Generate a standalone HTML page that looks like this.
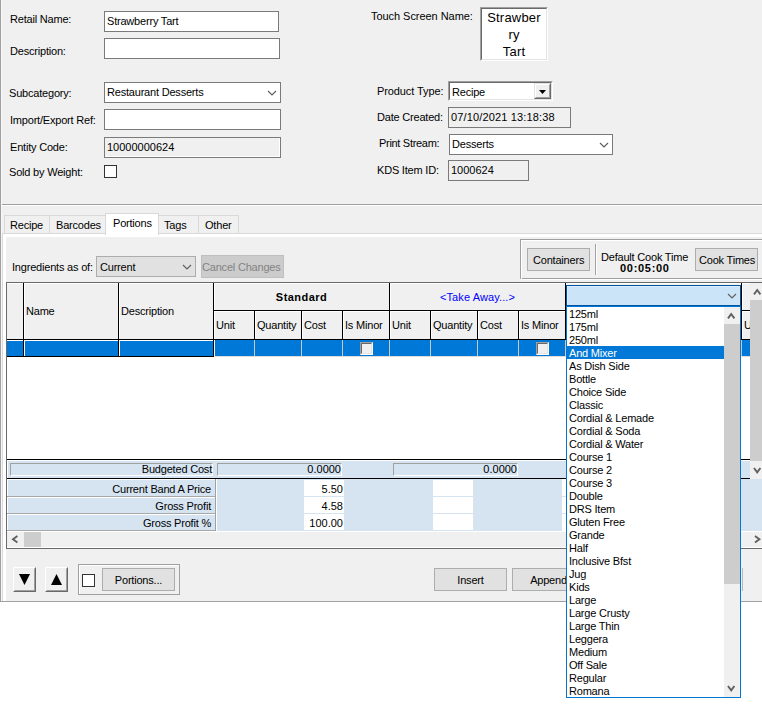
<!DOCTYPE html>
<html><head><meta charset="utf-8"><style>
html,body{margin:0;padding:0;background:#fff;width:762px;height:727px;overflow:hidden}
body div, body svg{position:absolute}
.t{white-space:pre;font-family:"Liberation Sans",sans-serif;font-size:11px;line-height:13px;color:#000;letter-spacing:-0.2px}
</style></head><body>
<div style="left:0px;top:0px;width:762px;height:601px;background:#f0f0f0"></div>
<div style="left:0px;top:0px;width:1px;height:602px;background:#a0a0a0"></div>
<div style="left:1px;top:0px;width:1px;height:601px;background:#f8f8f8"></div>
<div style="left:0px;top:601px;width:762px;height:1px;background:#a0a0a0"></div>
<div class="t" style="left:10px;top:13px;">Retail Name:</div>
<div class="t" style="left:10px;top:45px;">Description:</div>
<div class="t" style="left:9px;top:87px;">Subcategory:</div>
<div class="t" style="left:10px;top:114px;">Import/Export Ref:</div>
<div class="t" style="left:10px;top:141px;">Entity Code:</div>
<div class="t" style="left:9px;top:166px;">Sold by Weight:</div>
<div class="t" style="left:371px;top:10px;letter-spacing:-0.05px">Touch Screen Name:</div>
<div class="t" style="left:377px;top:85px;letter-spacing:-0.1px">Product Type:</div>
<div class="t" style="left:377px;top:111px;">Date Created:</div>
<div class="t" style="left:379px;top:137px;letter-spacing:-0.3px">Print Stream:</div>
<div class="t" style="left:377px;top:164px;">KDS Item ID:</div>
<div style="left:104px;top:11px;width:175px;height:21px;background:#fff;border:1px solid #7a7a7a;box-sizing:border-box"></div>
<div class="t" style="left:107px;top:15px;">Strawberry Tart</div>
<div style="left:104px;top:38px;width:176px;height:21px;background:#fff;border:1px solid #7a7a7a;box-sizing:border-box"></div>
<div style="left:104px;top:82px;width:177px;height:21px;background:#fff;border:1px solid #7a7a7a;box-sizing:border-box"></div>
<div class="t" style="left:107px;top:86px;">Restaurant Desserts</div>
<svg style="left:267.0px;top:90.0px" width="10" height="6"><path d="M1 1 L5.0 5 L9 1" fill="none" stroke="#606060" stroke-width="1.2"/></svg>
<div style="left:104px;top:109px;width:177px;height:21px;background:#fff;border:1px solid #7a7a7a;box-sizing:border-box"></div>
<div style="left:104px;top:137px;width:177px;height:21px;background:#f0f0f0;border:1px solid #7a7a7a;box-sizing:border-box"></div>
<div style="left:105px;top:138px;width:175px;height:19px;border-right:1px solid #fff;border-bottom:1px solid #fff;box-sizing:border-box"></div>
<div class="t" style="left:107px;top:141px;letter-spacing:0">10000000624</div>
<div style="left:104px;top:165px;width:13px;height:13px;background:#fff;border:1px solid #333;box-sizing:border-box"></div>
<div style="left:480px;top:7px;width:68px;height:54px;background:#fff;border-style:solid;border-width:1px;border-color:#a0a0a0 #fff #fff #a0a0a0;box-sizing:border-box"></div>
<div style="left:481px;top:8px;width:66px;height:52px;border-style:solid;border-width:1px;border-color:#696969 #e3e3e3 #e3e3e3 #696969;box-sizing:border-box"></div>
<div class="t" style="left:482px;top:9px;width:64px;text-align:center;font-size:13px;line-height:17px;letter-spacing:0.2px">Strawber<br>ry<br>Tart</div>
<div style="left:448px;top:81px;width:105px;height:20px;background:#fff;border-style:solid;border-width:1px;border-color:#a0a0a0 #fff #fff #a0a0a0;box-sizing:border-box"></div>
<div style="left:449px;top:82px;width:103px;height:18px;border-style:solid;border-width:1px;border-color:#696969 #e3e3e3 #e3e3e3 #696969;box-sizing:border-box"></div>
<div style="left:534px;top:83px;width:17px;height:16px;background:#f0f0f0;border-style:solid;border-width:1px;border-color:#e3e3e3 #696969 #696969 #e3e3e3;box-sizing:border-box"></div>
<div style="left:535px;top:84px;width:15px;height:14px;border-style:solid;border-width:1px;border-color:#fff #a0a0a0 #a0a0a0 #fff;box-sizing:border-box"></div>
<svg style="left:539px;top:90px" width="8" height="5"><path d="M0 0 L7 0 L3.5 4 Z" fill="#000"/></svg>
<div class="t" style="left:452px;top:86px;">Recipe</div>
<div style="left:448px;top:107px;width:123px;height:21px;background:#f0f0f0;border:1px solid #7a7a7a;box-sizing:border-box"></div>
<div class="t" style="left:451px;top:111px;letter-spacing:0.15px">07/10/2021 13:18:38</div>
<div style="left:449px;top:134px;width:164px;height:21px;background:#fff;border:1px solid #7a7a7a;box-sizing:border-box"></div>
<div class="t" style="left:452px;top:138px;">Desserts</div>
<svg style="left:599.0px;top:142.0px" width="10" height="6"><path d="M1 1 L5.0 5 L9 1" fill="none" stroke="#606060" stroke-width="1.2"/></svg>
<div style="left:448px;top:160px;width:81px;height:21px;background:#f0f0f0;border:1px solid #7a7a7a;box-sizing:border-box"></div>
<div class="t" style="left:451px;top:164px;letter-spacing:0">1000624</div>
<div style="left:2px;top:204px;width:760px;height:1px;background:#a0a0a0"></div>
<div style="left:2px;top:205px;width:760px;height:1px;background:#fff"></div>
<div style="left:4px;top:215px;width:46px;height:19px;background:#f0f0f0;border:1px solid #d9d9d9;border-bottom:none;box-sizing:border-box"></div>
<div class="t" style="left:10px;top:219px;">Recipe</div>
<div style="left:49px;top:215px;width:57px;height:19px;background:#f0f0f0;border:1px solid #d9d9d9;border-bottom:none;box-sizing:border-box"></div>
<div class="t" style="left:56px;top:219px;">Barcodes</div>
<div style="left:158px;top:215px;width:41px;height:19px;background:#f0f0f0;border:1px solid #d9d9d9;border-bottom:none;box-sizing:border-box"></div>
<div class="t" style="left:164px;top:219px;">Tags</div>
<div style="left:198px;top:215px;width:41px;height:19px;background:#f0f0f0;border:1px solid #d9d9d9;border-bottom:none;box-sizing:border-box"></div>
<div class="t" style="left:205px;top:219px;">Other</div>
<div style="left:2px;top:233px;width:760px;height:368px;background:#fff;border:1px solid #d9d9d9;border-right:none;border-bottom:none;box-sizing:border-box"></div>
<div style="left:6px;top:237px;width:756px;height:364px;background:#f0f0f0"></div>
<div style="left:105px;top:213px;width:54px;height:22px;background:#fff;border:1px solid #d9d9d9;border-bottom:none;box-sizing:border-box"></div>
<div class="t" style="left:113px;top:217px;">Portions</div>
<div class="t" style="left:12px;top:261px;">Ingredients as of:</div>
<div style="left:96px;top:256px;width:100px;height:21px;background:#e1e1e1;border:1px solid #adadad;box-sizing:border-box"></div>
<div class="t" style="left:100px;top:261px;">Current</div>
<svg style="left:182.0px;top:264.0px" width="10" height="6"><path d="M1 1 L5.0 5 L9 1" fill="none" stroke="#606060" stroke-width="1.2"/></svg>
<div style="left:201px;top:255px;width:83px;height:23px;background:#cccccc;border:1px solid #bfbfbf;box-sizing:border-box"></div>
<div class="t" style="left:202px;top:261px;color:#838383">Cancel Changes</div>
<div style="left:520px;top:239px;width:242px;height:40px;border:1px solid #a0a0a0;border-right:none;box-sizing:border-box"></div>
<div style="left:521px;top:240px;width:241px;height:39px;border-top:1px solid #fff;border-left:1px solid #fff;box-sizing:border-box"></div>
<div style="left:520px;top:279px;width:242px;height:1px;background:#fff"></div>
<div style="left:527px;top:248px;width:63px;height:23px;background:#e1e1e1;border:1px solid #adadad;box-sizing:border-box"></div>
<div class="t" style="left:533px;top:254px;">Containers</div>
<div style="left:595px;top:244px;width:1px;height:31px;background:#a0a0a0"></div>
<div style="left:596px;top:244px;width:1px;height:31px;background:#fff"></div>
<div class="t" style="left:601px;top:251px;">Default Cook Time</div>
<div class="t" style="left:620px;top:262px;font-weight:bold;letter-spacing:0.7px">00:05:00</div>
<div style="left:695px;top:248px;width:63px;height:23px;background:#e1e1e1;border:1px solid #adadad;box-sizing:border-box"></div>
<div class="t" style="left:699px;top:254px;">Cook Times</div>
<div style="left:6px;top:282px;width:756px;height:267px;background:#fff;border:1px solid #696969;border-right:none;box-sizing:border-box"></div>
<div style="left:7px;top:283px;width:755px;height:57px;background:#f0f0f0"></div>
<div style="left:7px;top:283px;width:755px;height:1px;background:#fff"></div>
<div style="left:24px;top:283px;width:1px;height:57px;background:#fff"></div>
<div style="left:119px;top:283px;width:1px;height:57px;background:#fff"></div>
<div style="left:214px;top:283px;width:1px;height:57px;background:#fff"></div>
<div style="left:390px;top:283px;width:1px;height:57px;background:#fff"></div>
<div style="left:566px;top:283px;width:1px;height:57px;background:#fff"></div>
<div style="left:742px;top:283px;width:1px;height:57px;background:#fff"></div>
<div style="left:214px;top:311px;width:536px;height:1px;background:#fff"></div>
<div style="left:255px;top:311px;width:1px;height:27px;background:#fff"></div>
<div style="left:302px;top:311px;width:1px;height:27px;background:#fff"></div>
<div style="left:343px;top:311px;width:1px;height:27px;background:#fff"></div>
<div style="left:431px;top:311px;width:1px;height:27px;background:#fff"></div>
<div style="left:478px;top:311px;width:1px;height:27px;background:#fff"></div>
<div style="left:519px;top:311px;width:1px;height:27px;background:#fff"></div>
<div style="left:23px;top:283px;width:1px;height:57px;background:#000"></div>
<div style="left:118px;top:283px;width:1px;height:57px;background:#000"></div>
<div style="left:213px;top:283px;width:1px;height:57px;background:#000"></div>
<div style="left:389px;top:283px;width:1px;height:57px;background:#000"></div>
<div style="left:565px;top:283px;width:1px;height:57px;background:#000"></div>
<div style="left:741px;top:283px;width:1px;height:57px;background:#000"></div>
<div style="left:7px;top:339px;width:755px;height:1px;background:#000"></div>
<div style="left:214px;top:310px;width:536px;height:1px;background:#000"></div>
<div style="left:254px;top:310px;width:1px;height:29px;background:#000"></div>
<div style="left:301px;top:310px;width:1px;height:29px;background:#000"></div>
<div style="left:342px;top:310px;width:1px;height:29px;background:#000"></div>
<div style="left:430px;top:310px;width:1px;height:29px;background:#000"></div>
<div style="left:477px;top:310px;width:1px;height:29px;background:#000"></div>
<div style="left:518px;top:310px;width:1px;height:29px;background:#000"></div>
<div class="t" style="left:26px;top:305px;">Name</div>
<div class="t" style="left:121px;top:305px;">Description</div>
<div class="t" style="left:214px;top:291px;width:175px;text-align:center;font-weight:bold;letter-spacing:0.45px">Standard</div>
<div class="t" style="left:390px;top:291px;width:175px;text-align:center;color:#0000ff;letter-spacing:0.1px">&lt;Take Away...&gt;</div>
<div class="t" style="left:216px;top:319px;">Unit</div>
<div class="t" style="left:257px;top:319px;">Quantity</div>
<div class="t" style="left:304px;top:319px;">Cost</div>
<div class="t" style="left:345px;top:319px;">Is Minor</div>
<div class="t" style="left:392px;top:319px;">Unit</div>
<div class="t" style="left:433px;top:319px;">Quantity</div>
<div class="t" style="left:480px;top:319px;">Cost</div>
<div class="t" style="left:521px;top:319px;">Is Minor</div>
<div class="t" style="left:744px;top:319px;">Unit</div>
<div style="left:7px;top:340px;width:755px;height:16px;background:#0078d7"></div>
<div style="left:7px;top:340px;width:206px;height:1px;background:#fff"></div>
<div style="left:23px;top:339px;width:1px;height:18px;background:#000"></div>
<div style="left:118px;top:339px;width:1px;height:18px;background:#000"></div>
<div style="left:213px;top:339px;width:1px;height:18px;background:#000"></div>
<div style="left:24px;top:340px;width:1px;height:16px;background:#fff"></div>
<div style="left:119px;top:340px;width:1px;height:16px;background:#fff"></div>
<div style="left:214px;top:340px;width:1px;height:16px;background:#fff"></div>
<div style="left:7px;top:356px;width:207px;height:1px;background:#000"></div>
<div style="left:254px;top:340px;width:1px;height:16px;background:#c8c8c8"></div>
<div style="left:301px;top:340px;width:1px;height:16px;background:#c8c8c8"></div>
<div style="left:342px;top:340px;width:1px;height:16px;background:#c8c8c8"></div>
<div style="left:389px;top:340px;width:1px;height:16px;background:#c8c8c8"></div>
<div style="left:430px;top:340px;width:1px;height:16px;background:#c8c8c8"></div>
<div style="left:477px;top:340px;width:1px;height:16px;background:#c8c8c8"></div>
<div style="left:518px;top:340px;width:1px;height:16px;background:#c8c8c8"></div>
<div style="left:565px;top:340px;width:1px;height:16px;background:#c8c8c8"></div>
<div style="left:741px;top:340px;width:1px;height:16px;background:#c8c8c8"></div>
<div style="left:360px;top:342px;width:13px;height:13px;background:#f0f0f0;border:1px solid #a0a0a0;border-right-color:#fff;border-bottom-color:#fff;box-sizing:border-box"></div>
<div style="left:361px;top:343px;width:11px;height:11px;border:1px solid #696969;border-right-color:#e3e3e3;border-bottom-color:#e3e3e3;box-sizing:border-box"></div>
<div style="left:536px;top:342px;width:13px;height:13px;background:#f0f0f0;border:1px solid #a0a0a0;border-right-color:#fff;border-bottom-color:#fff;box-sizing:border-box"></div>
<div style="left:537px;top:343px;width:11px;height:11px;border:1px solid #696969;border-right-color:#e3e3e3;border-bottom-color:#e3e3e3;box-sizing:border-box"></div>
<div style="left:214px;top:356px;width:548px;height:1px;background:#e0dcd8"></div>
<div style="left:7px;top:459px;width:755px;height:1px;background:#000"></div>
<div style="left:7px;top:460px;width:755px;height:18px;background:#d6e4f2"></div>
<div style="left:7px;top:478px;width:755px;height:1px;background:#000"></div>
<div style="left:7px;top:479px;width:755px;height:52px;background:#d6e4f2"></div>
<div style="left:10px;top:463px;width:203px;height:13px;border:1px solid #a0a0a0;border-right-color:#fff;border-bottom-color:#fff;box-sizing:border-box"></div>
<div class="t" style="left:10px;top:463px;width:202px;text-align:right">Budgeted Cost</div>
<div style="left:217px;top:463px;width:125px;height:13px;border:1px solid #a0a0a0;border-right-color:#fff;border-bottom-color:#fff;box-sizing:border-box"></div>
<div class="t" style="left:217px;top:463px;width:124px;text-align:right;letter-spacing:0">0.0000</div>
<div style="left:393px;top:463px;width:125px;height:13px;border:1px solid #a0a0a0;border-right-color:#fff;border-bottom-color:#fff;box-sizing:border-box"></div>
<div class="t" style="left:393px;top:463px;width:124px;text-align:right;letter-spacing:0">0.0000</div>
<div style="left:7px;top:460px;width:755px;height:1px;background:#fff"></div>
<div style="left:7px;top:479px;width:209px;height:1px;background:#fff"></div>
<div style="left:7px;top:460px;width:1px;height:18px;background:#fff"></div>
<div style="left:7px;top:479px;width:1px;height:52px;background:#fff"></div>
<div style="left:7px;top:496px;width:209px;height:1px;background:#a8a8a8"></div>
<div style="left:7px;top:513px;width:209px;height:1px;background:#a8a8a8"></div>
<div style="left:7px;top:530px;width:209px;height:1px;background:#a8a8a8"></div>
<div style="left:8px;top:497px;width:207px;height:1px;background:#fff"></div>
<div style="left:8px;top:514px;width:207px;height:1px;background:#fff"></div>
<div style="left:215px;top:479px;width:1px;height:52px;background:#a0a0a0"></div>
<div style="left:216px;top:479px;width:1px;height:52px;background:#fff"></div>
<div class="t" style="left:10px;top:483px;width:201px;text-align:right">Current Band A Price</div>
<div style="left:304px;top:480px;width:40px;height:16px;background:#fff"></div>
<div class="t" style="left:304px;top:483px;width:39px;text-align:right;letter-spacing:0">5.50</div>
<div style="left:433px;top:480px;width:40px;height:16px;background:#fff"></div>
<div class="t" style="left:10px;top:500px;width:201px;text-align:right">Gross Profit</div>
<div style="left:304px;top:497px;width:40px;height:16px;background:#fff"></div>
<div class="t" style="left:304px;top:500px;width:39px;text-align:right;letter-spacing:0">4.58</div>
<div style="left:433px;top:497px;width:40px;height:16px;background:#fff"></div>
<div class="t" style="left:10px;top:517px;width:201px;text-align:right">Gross Profit %</div>
<div style="left:304px;top:514px;width:40px;height:16px;background:#fff"></div>
<div class="t" style="left:304px;top:517px;width:39px;text-align:right;letter-spacing:0">100.00</div>
<div style="left:433px;top:514px;width:40px;height:16px;background:#fff"></div>
<div style="left:562px;top:479px;width:4px;height:52px;background:#fff"></div>
<div style="left:562px;top:496px;width:4px;height:1px;background:#d6e4f2"></div>
<div style="left:562px;top:513px;width:4px;height:1px;background:#d6e4f2"></div>
<div style="left:7px;top:531px;width:755px;height:17px;background:#f0f0f0;border-top:1px solid #fff;border-bottom:1px solid #fff;box-sizing:border-box"></div>
<svg style="left:10.8px;top:534.3px" width="8.399999999999999" height="10.400000000000091"><path d="M6.40 2.00 L2.00 5.20 L6.40 8.40" fill="none" stroke="#606060" stroke-width="1.9" stroke-linejoin="miter"/></svg>
<div style="left:24px;top:532px;width:17px;height:15px;background:#cdcdcd"></div>
<svg style="left:752.8px;top:534.3px" width="8.400000000000091" height="10.400000000000091"><path d="M2.00 2.00 L6.40 5.20 L2.00 8.40" fill="none" stroke="#606060" stroke-width="1.9" stroke-linejoin="miter"/></svg>
<div style="left:750px;top:283px;width:12px;height:196px;background:#f0f0f0"></div>
<div style="left:750px;top:300px;width:12px;height:161px;background:#cdcdcd"></div>
<svg style="left:751.8px;top:287.8px" width="10.400000000000091" height="8.399999999999977"><path d="M2.00 6.40 L5.20 2.00 L8.40 6.40" fill="none" stroke="#606060" stroke-width="1.9" stroke-linejoin="miter"/></svg>
<svg style="left:751.8px;top:465.8px" width="10.400000000000091" height="8.399999999999977"><path d="M2.00 2.00 L5.20 6.40 L8.40 2.00" fill="none" stroke="#606060" stroke-width="1.9" stroke-linejoin="miter"/></svg>
<div style="left:6px;top:548px;width:756px;height:1px;background:#696969"></div>
<div style="left:13px;top:567px;width:23px;height:25px;background:#f0f0f0;border-style:solid;border-width:1px;border-color:#fff #696969 #696969 #fff;box-sizing:border-box"></div>
<div style="left:14px;top:568px;width:21px;height:23px;border-style:solid;border-width:1px;border-color:#f0f0f0 #a0a0a0 #a0a0a0 #f0f0f0;box-sizing:border-box"></div>
<svg style="left:19px;top:574px" width="11" height="11"><path d="M0 0 L11 0 L5.5 11 Z" fill="#000"/></svg>
<div style="left:45px;top:567px;width:23px;height:25px;background:#f0f0f0;border-style:solid;border-width:1px;border-color:#fff #696969 #696969 #fff;box-sizing:border-box"></div>
<div style="left:46px;top:568px;width:21px;height:23px;border-style:solid;border-width:1px;border-color:#f0f0f0 #a0a0a0 #a0a0a0 #f0f0f0;box-sizing:border-box"></div>
<svg style="left:51px;top:574px" width="11" height="11"><path d="M0 11 L11 11 L5.5 0 Z" fill="#000"/></svg>
<div style="left:78px;top:564px;width:102px;height:31px;border:1px solid #a0a0a0;box-sizing:border-box"></div>
<div style="left:79px;top:565px;width:100px;height:29px;border:1px solid #fff;border-right:none;border-bottom:none;box-sizing:border-box"></div>
<div style="left:82px;top:574px;width:13px;height:13px;background:#fff;border:1px solid #333;box-sizing:border-box"></div>
<div style="left:102px;top:568px;width:73px;height:23px;background:#e1e1e1;border:1px solid #adadad;box-sizing:border-box"></div>
<div class="t" style="left:102px;top:574px;width:73px;text-align:center">Portions...</div>
<div style="left:434px;top:568px;width:73px;height:23px;background:#e1e1e1;border:1px solid #adadad;box-sizing:border-box"></div>
<div class="t" style="left:434px;top:574px;width:73px;text-align:center">Insert</div>
<div style="left:512px;top:568px;width:73px;height:23px;background:#e1e1e1;border:1px solid #adadad;box-sizing:border-box"></div>
<div class="t" style="left:512px;top:574px;width:73px;text-align:center">Append</div>
<div style="left:742px;top:568px;width:1px;height:23px;background:#b8b8b8"></div>
<div style="left:566px;top:285px;width:175px;height:21px;background:#cce4f7;border:1px solid #00549f;box-sizing:border-box"></div>
<div style="left:567px;top:286px;width:173px;height:19px;border-top:1px solid #dcecfa;border-left:1px solid #dcecfa;box-sizing:border-box"></div>
<svg style="left:727.0px;top:293.0px" width="10" height="6"><path d="M1 1 L5.0 5 L9 1" fill="none" stroke="#606060" stroke-width="1.2"/></svg>
<div style="left:566px;top:306px;width:175px;height:392px;background:#fff;border:1px solid #0078d7;box-sizing:border-box"></div>
<div style="left:567px;top:306px;width:157px;height:391px;overflow:hidden">
<div class="t" style="left:2px;top:1.5px">125ml</div>
<div class="t" style="left:2px;top:14.5px">175ml</div>
<div class="t" style="left:2px;top:27.5px">250ml</div>
<div style="left:0;top:40px;width:157px;height:13px;background:#0078d7"></div>
<div class="t" style="left:2px;top:40.5px;color:#fff">And Mixer</div>
<div class="t" style="left:2px;top:53.5px">As Dish Side</div>
<div class="t" style="left:2px;top:66.5px">Bottle</div>
<div class="t" style="left:2px;top:79.5px">Choice Side</div>
<div class="t" style="left:2px;top:92.5px">Classic</div>
<div class="t" style="left:2px;top:105.5px">Cordial &amp; Lemade</div>
<div class="t" style="left:2px;top:118.5px">Cordial &amp; Soda</div>
<div class="t" style="left:2px;top:131.5px">Cordial &amp; Water</div>
<div class="t" style="left:2px;top:144.5px">Course 1</div>
<div class="t" style="left:2px;top:157.5px">Course 2</div>
<div class="t" style="left:2px;top:170.5px">Course 3</div>
<div class="t" style="left:2px;top:183.5px">Double</div>
<div class="t" style="left:2px;top:196.5px">DRS Item</div>
<div class="t" style="left:2px;top:209.5px">Gluten Free</div>
<div class="t" style="left:2px;top:222.5px">Grande</div>
<div class="t" style="left:2px;top:235.5px">Half</div>
<div class="t" style="left:2px;top:248.5px">Inclusive Bfst</div>
<div class="t" style="left:2px;top:261.5px">Jug</div>
<div class="t" style="left:2px;top:274.5px">Kids</div>
<div class="t" style="left:2px;top:287.5px">Large</div>
<div class="t" style="left:2px;top:300.5px">Large Crusty</div>
<div class="t" style="left:2px;top:313.5px">Large Thin</div>
<div class="t" style="left:2px;top:326.5px">Leggera</div>
<div class="t" style="left:2px;top:339.5px">Medium</div>
<div class="t" style="left:2px;top:352.5px">Off Sale</div>
<div class="t" style="left:2px;top:365.5px">Regular</div>
<div class="t" style="left:2px;top:378.5px">Romana</div>
</div>
<div style="left:724px;top:307px;width:16px;height:390px;background:#f0f0f0"></div>
<div style="left:724px;top:324px;width:16px;height:260px;background:#cdcdcd"></div>
<svg style="left:726.3px;top:311.8px" width="10.400000000000091" height="8.399999999999977"><path d="M2.00 6.40 L5.20 2.00 L8.40 6.40" fill="none" stroke="#606060" stroke-width="1.9" stroke-linejoin="miter"/></svg>
<svg style="left:726.3px;top:683.8px" width="10.400000000000091" height="8.400000000000091"><path d="M2.00 2.00 L5.20 6.40 L8.40 2.00" fill="none" stroke="#606060" stroke-width="1.9" stroke-linejoin="miter"/></svg>
</body></html>
